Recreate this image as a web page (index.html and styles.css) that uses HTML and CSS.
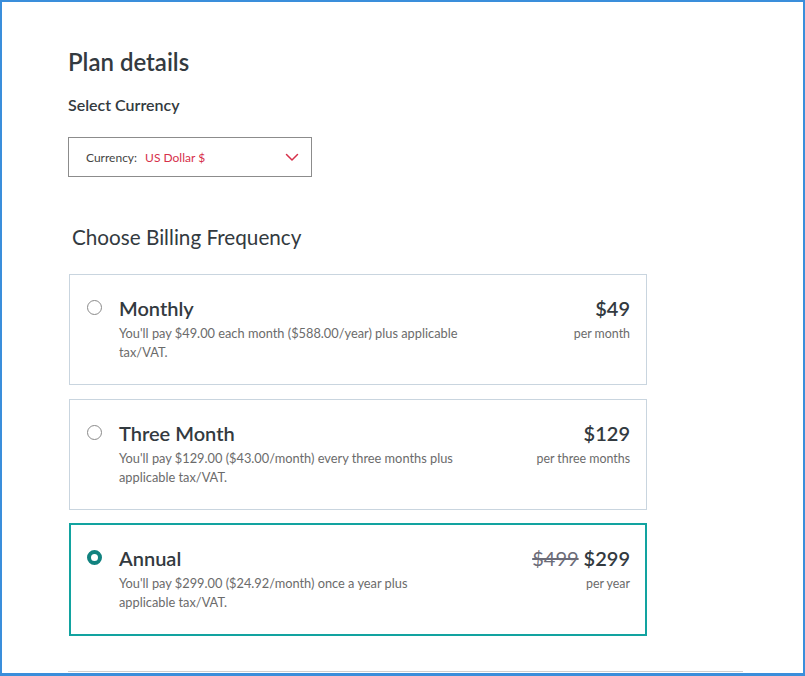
FILE: index.html
```html
<!DOCTYPE html>
<html lang="en">
<head>
  <meta charset="UTF-8" />
  <meta name="viewport" content="width=device-width, initial-scale=1.0"/>
  <title>Plan details</title>
  <link rel="stylesheet" href="styles.css">
</head>
<body>

<div class="frame">
  <main class="plan">
    <h1 class="plan-title">Plan details</h1>

    <h2 class="section-label">Select Currency</h2>
    <div class="currency-select">
      <span class="currency-key">Currency:</span>
      <span class="currency-value">US Dollar $</span>
      <svg class="chevron" width="14" height="9" viewBox="0 0 14 9">
        <path d="M1.5 1.5 L7 7 L12.5 1.5" fill="none" stroke="#d6304a" stroke-width="1.5" stroke-linecap="round" stroke-linejoin="round"/>
      </svg>
    </div>

    <h2 class="billing-title">Choose Billing Frequency</h2>

    <ul class="options">
      <li class="option">
        <span class="radio"></span>
        <div class="option-body">
          <div class="option-name">Monthly</div>
          <p class="option-desc">You'll pay $49.00 each month ($588.00/year) plus applicable tax/VAT.</p>
        </div>
        <div class="option-price">
          <div class="amount">$49</div>
          <div class="period">per month</div>
        </div>
      </li>

      <li class="option">
        <span class="radio"></span>
        <div class="option-body">
          <div class="option-name">Three Month</div>
          <p class="option-desc">You'll pay $129.00 ($43.00/month) every three months plus applicable tax/VAT.</p>
        </div>
        <div class="option-price">
          <div class="amount">$129</div>
          <div class="period">per three months</div>
        </div>
      </li>

      <li class="option selected">
        <span class="radio"></span>
        <div class="option-body">
          <div class="option-name">Annual</div>
          <p class="option-desc">You'll pay $299.00 ($24.92/month) once a year plus<br>applicable tax/VAT.</p>
        </div>
        <div class="option-price">
          <div class="amount"><s class="old-price">$499</s> $299</div>
          <div class="period">per year</div>
        </div>
      </li>
    </ul>

    <hr class="divider">
  </main>
</div>

</body>
</html>
```

FILE: styles.css
```css
* {
  box-sizing: border-box;
}

body {
  margin: 0;
  font-family: Lato, "Open Sans", sans-serif;
  color: #333a40;
  background: #fff;
}

.frame {
  height: 676px;
  border: 2px solid #3a8edb;
  border-bottom-width: 3px;
  overflow: hidden;
}

.plan {
  padding: 44px 0 0 66px;
  width: 743px;
}

.plan-title {
  margin: 0;
  font-size: 24px;
  font-weight: 600;
  line-height: 32px;
}

.section-label {
  margin: 16px 0 0;
  font-size: 16px;
  font-weight: 600;
  line-height: 22px;
}

.currency-select {
  display: flex;
  align-items: center;
  width: 244px;
  height: 40px;
  margin-top: 21px;
  padding: 0 12px 0 17px;
  border: 1px solid #8c8c8c;
  font-size: 12px;
}

.currency-key {
  color: #444;
  margin-right: 8px;
}

.currency-value {
  color: #d6304a;
  flex: 1;
}

.billing-title {
  margin: 47px 0 0 4px;
  font-size: 20.7px;
  font-weight: 400;
  line-height: 26px;
}

.options {
  list-style: none;
  margin: 24px 0 0 1px;
  padding: 0;
  width: 578px;
}

.option {
  display: flex;
  min-height: 111px;
  margin-bottom: 14px;
  padding: 21px 16px 0 17px;
  border: 1px solid #c9d5df;
}

/* the chosen plan gets a thicker teal outline */
.option.selected {
  margin-top: -1px;
  border: 2px solid #12a3a0;
  padding: 21px 15px 0 16px;
  min-height: 113px;
}

.radio {
  flex: none;
  width: 15px;
  height: 15px;
  margin: 4px 17px 0 0;
  border: 1px solid #8a8a8a;
  border-radius: 50%;
}

.selected .radio {
  border: 4px solid #11827f;
}

.option-body {
  flex: 1;
}

.option-name {
  font-size: 20px;
  font-weight: 600;
  line-height: 24px;
}

.option-desc {
  margin: 4px 0 0;
  max-width: 350px;
  font-size: 12.8px;
  line-height: 19px;
  color: #6b6b6b;
}

.option-price {
  text-align: right;
}

.amount {
  font-size: 20px;
  font-weight: 600;
  line-height: 24px;
}

.old-price {
  color: #6c6c78;
  font-weight: 400;
}

.period {
  margin-top: 4px;
  font-size: 12.4px;
  line-height: 20px;
  color: #6b6b6b;
}

.divider {
  margin: 35px 0 0;
  width: 675px;
  border: 0;
  border-top: 1px solid #cfcfcf;
}
```
